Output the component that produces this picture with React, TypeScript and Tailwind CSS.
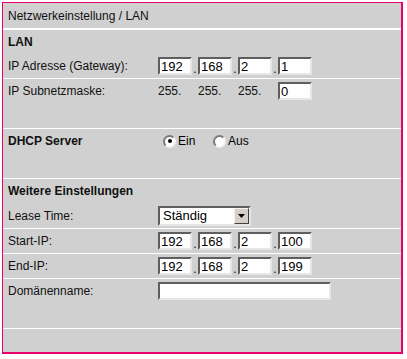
import React from "react";

const font = { fontFamily: '"Liberation Sans", Arial, sans-serif' };

function Box({ value, wide }: { value: string; wide?: boolean }) {
  return (
    <input
      readOnly
      value={value}
      className={
        (wide ? "w-[173px] " : "w-[34px] ") +
        "h-[18px] border-2 border-t-[#5e5e5e] border-l-[#5e5e5e] border-r-[#e6e6e6] border-b-[#e6e6e6] bg-white pl-[1px] text-[13px] leading-none text-black outline-none"
      }
    />
  );
}

function Dot() {
  return <span className="w-[6px] text-center text-[12px] leading-[12px] text-black">.</span>;
}

function Ip({ a, b, c, d }: { a: string; b: string; c: string; d: string }) {
  return (
    <div className="flex items-end">
      <Box value={a} />
      <Dot />
      <Box value={b} />
      <Dot />
      <Box value={c} />
      <Dot />
      <Box value={d} />
    </div>
  );
}

function Radio({ checked }: { checked?: boolean }) {
  return (
    <span className="flex h-[13px] w-[13px] items-center justify-center rounded-full border-2 border-t-[#7a7a7a] border-l-[#7a7a7a] border-r-[#f2f2f2] border-b-[#f2f2f2] bg-white">
      {checked ? <span className="h-[4px] w-[4px] rounded-full bg-black" /> : null}
    </span>
  );
}

function Row({
  label,
  bold,
  h25,
  line,
  children,
}: {
  label?: string;
  bold?: boolean;
  h25?: boolean;
  line?: boolean;
  children?: React.ReactNode;
}) {
  return (
    <>
      <div className={(h25 ? "h-[25px] " : "h-[24px] ") + "flex items-center"}>
        <div className={"w-[155px] pl-[5px] text-[12px] text-[#111] " + (bold ? "font-bold" : "")}>{label}</div>
        <div className="flex items-center">{children}</div>
      </div>
      {line ? <div className="h-px bg-white" /> : null}
    </>
  );
}

export default function App() {
  return (
    <div className="h-[359px] w-[407px] bg-white pl-[2px] pt-[2px]" style={font}>
      <div className="flex h-[352px] w-[401px] flex-col border-l border-t border-r-2 border-b-2 border-[#e8006e] bg-[#d0d0d0]">
        <div className="flex h-[25px] items-center pl-[5px] text-[12px] text-[#111]">Netzwerkeinstellung / LAN</div>
        <div className="h-[2px] bg-white" />
        <Row label="LAN" bold />
        <Row label="IP Adresse (Gateway):" line>
          <Ip a="192" b="168" c="2" d="1" />
        </Row>
        <Row label="IP Subnetzmaske:">
          <div className="flex items-center text-[12px] text-[#111]">
            <span className="w-[40px]">255.</span>
            <span className="w-[40px]">255.</span>
            <span className="w-[40px]">255.</span>
            <Box value="0" />
          </div>
        </Row>
        <Row h25 line />
        <Row label="DHCP Server" bold>
          <div className="flex items-center pl-[5px] text-[12px] text-black">
            <span className="flex w-[50px] items-center">
              <Radio checked />
              <span className="ml-[2px]">Ein</span>
            </span>
            <span className="flex items-center">
              <Radio />
              <span className="ml-[2px]">Aus</span>
            </span>
          </div>
        </Row>
        <Row h25 line />
        <Row label="Weitere Einstellungen" bold />
        <Row label="Lease Time:" h25 line>
          <div className="flex h-[20px] w-[93px] items-center justify-between border-2 border-t-[#5e5e5e] border-l-[#5e5e5e] border-r-[#e6e6e6] border-b-[#e6e6e6] bg-white">
            <span className="pl-[3px] text-[13px] leading-none text-black">Ständig</span>
            <span className="flex h-[16px] w-[15px] items-center justify-center border border-t-[#f4f4f4] border-l-[#f4f4f4] border-r-[#404040] border-b-[#404040] bg-[#d4d0c8]">
              <svg width="7" height="4" viewBox="0 0 7 4">
                <path d="M0 0H7L3.5 4Z" fill="#000" />
              </svg>
            </span>
          </div>
        </Row>
        <Row label="Start-IP:" line>
          <Ip a="192" b="168" c="2" d="100" />
        </Row>
        <Row label="End-IP:" line>
          <Ip a="192" b="168" c="2" d="199" />
        </Row>
        <Row label="Domänenname:">
          <Box value="" wide />
        </Row>
        <Row h25 line />
        <div className="h-[23px]" />
      </div>
    </div>
  );
}
